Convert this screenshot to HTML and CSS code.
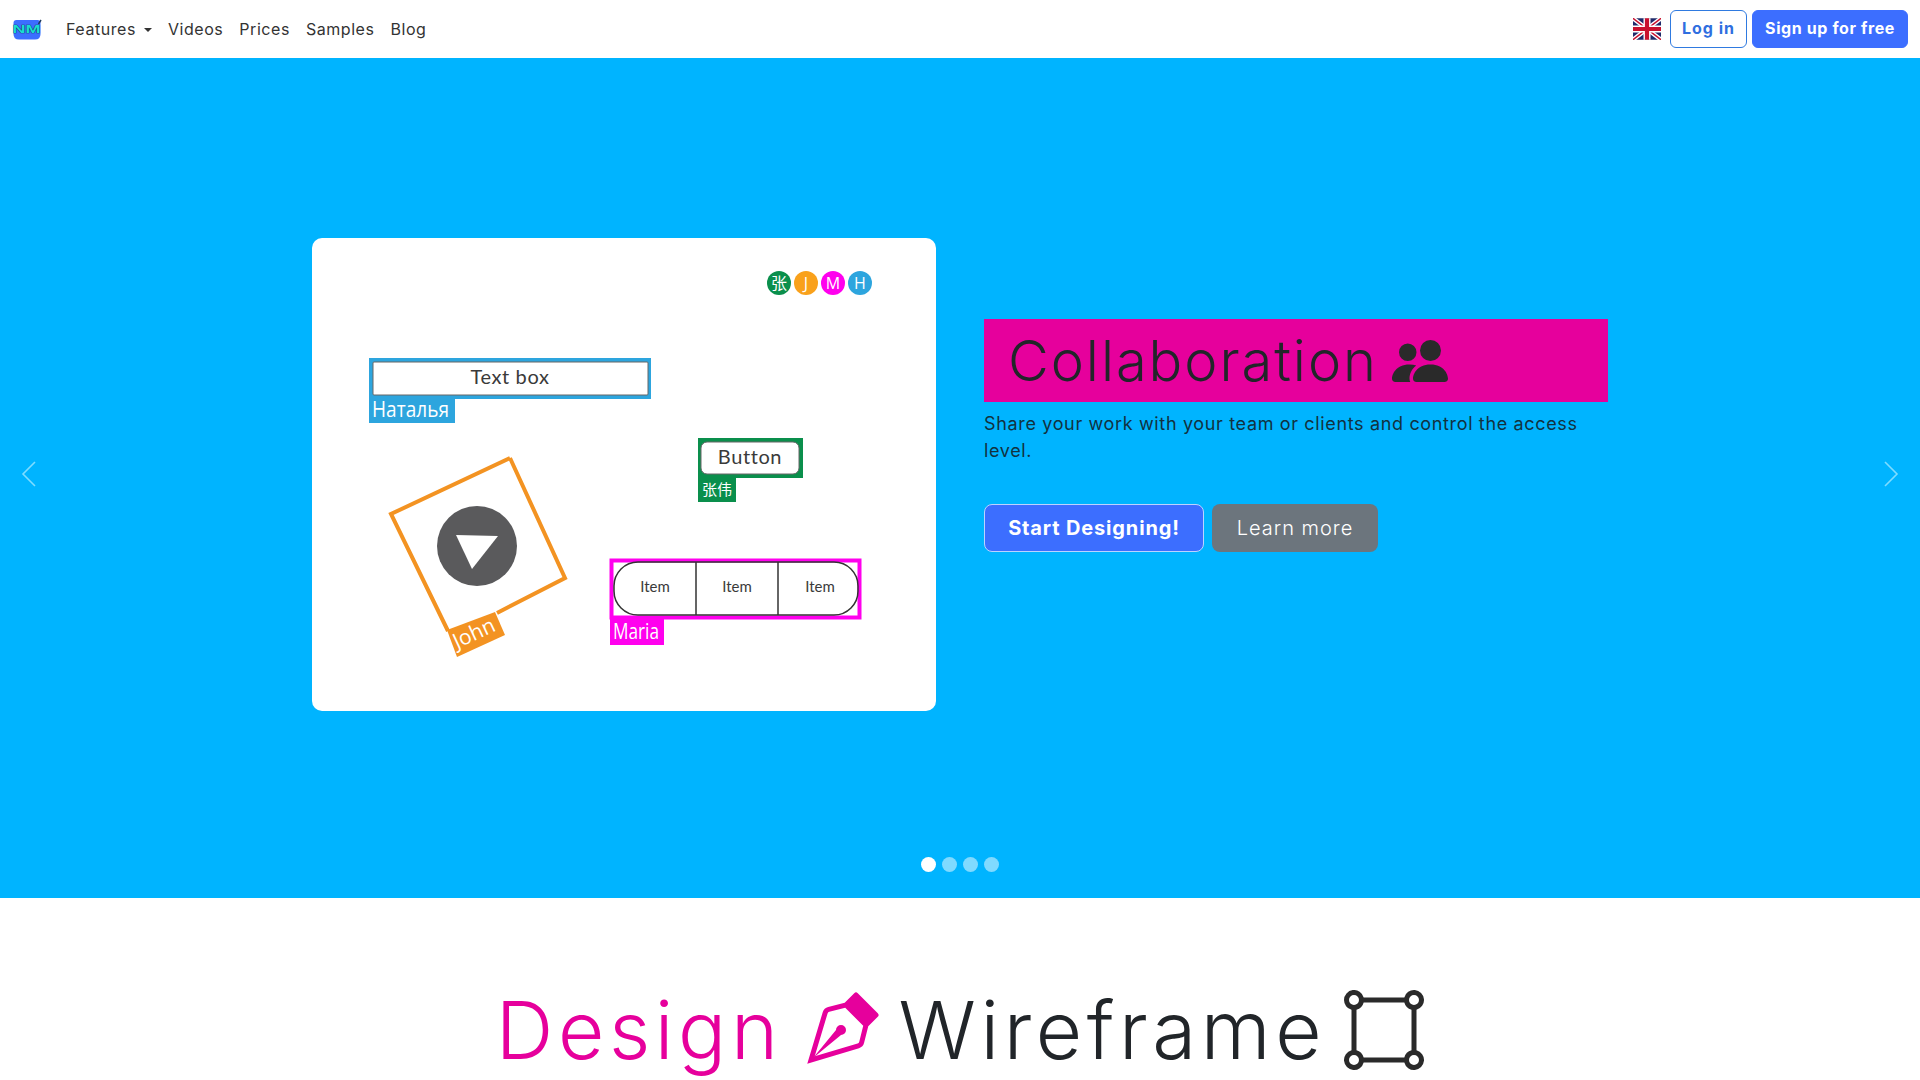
FILE: index.html
```html
<!DOCTYPE html>
<html lang="en">
<head>
  <meta charset="UTF-8" />
  <meta name="viewport" content="width=device-width, initial-scale=1.0"/>
  <title>Collaboration - Wireframe Designer</title>
  <link rel="stylesheet" href="styles.css">
</head>
<body>
  <nav class="navbar">
    <a class="brand" href="#">
      <svg class="brand-logo" viewBox="0 0 30 21">
        <path class="logo-bg" d="M1.500 4q0-3 3-3h21q3 0 3 3v11q0 5.500-5.500 5.500H7q-5.500 0-5.500-5.500z"/>
        <text class="logo-text" x="0.500" y="13.500" textLength="28" lengthAdjust="spacingAndGlyphs">NM</text>
        <path class="logo-pen" d="M26.500 5L29 1"/>
      </svg>
    </a>
    <ul class="nav-links">
      <li><a href="#">Features<span class="caret"></span></a></li>
      <li><a href="#">Videos</a></li>
      <li><a href="#">Prices</a></li>
      <li><a href="#">Samples</a></li>
      <li><a href="#">Blog</a></li>
    </ul>
    <div class="nav-right">
      <svg class="flag" viewBox="0 0 60 46">
        <rect width="60" height="46" fill="#1f2a6b"/>
        <path d="M0 0L60 46M60 0L0 46" stroke="#fff" stroke-width="9"/>
        <path d="M0 0L60 46M60 0L0 46" stroke="#c8102e" stroke-width="3"/>
        <path d="M30 0V46M0 23H60" stroke="#fff" stroke-width="15"/>
        <path d="M30 0V46M0 23H60" stroke="#c8102e" stroke-width="9"/>
      </svg>
      <a class="btn btn-outline" href="#">Log in</a>
      <a class="btn btn-primary" href="#">Sign up for free</a>
    </div>
  </nav>

  <section class="hero">
    <div class="slide">
      <div class="slide-image">
        <svg class="sketch" viewBox="312 238 624 473">
          <circle class="fill-green" cx="779" cy="283" r="12"/>
          <circle class="fill-orange" cx="806" cy="283" r="12"/>
          <circle class="fill-pink" cx="833" cy="283" r="12"/>
          <circle class="fill-blue" cx="860" cy="283" r="12"/>
          <text class="avatar-text cjk" x="779" y="289" text-anchor="middle">张</text>
          <text class="avatar-text" x="806" y="289" text-anchor="middle">J</text>
          <text class="avatar-text" x="833" y="289" text-anchor="middle">M</text>
          <text class="avatar-text" x="860" y="289" text-anchor="middle">H</text>

          <!-- text box, selected by Natalya -->
          <rect class="fill-blue" x="369" y="358" width="282" height="41"/>
          <rect class="inner" x="373" y="362" width="275" height="33" rx="1"/>
          <text class="hand hand-big" x="510" y="384" text-anchor="middle">Text box</text>
          <rect class="fill-blue" x="369" y="399" width="86" height="24"/>
          <text class="tag" x="372" y="417" textLength="77" lengthAdjust="spacingAndGlyphs">Наталья</text>

          <!-- button, selected by Zhang Wei -->
          <rect class="fill-green" x="698" y="438" width="105" height="40"/>
          <rect class="inner" x="701" y="442" width="98" height="32" rx="6"/>
          <text class="hand hand-big" x="750" y="464" text-anchor="middle">Button</text>
          <rect class="fill-green" x="698" y="478" width="38" height="24"/>
          <text class="tag-cjk cjk" x="702" y="495">张伟</text>

          <!-- video, selected by John -->
          <path class="frame-orange" d="M510 458L391 514L448 631M497 613L565 578L510 458"/>
          <polygon class="fill-orange-dark" points="447,630 457,657 505,635 495,612"/>
          <text class="tag" transform="translate(457 649) rotate(-25)" textLength="44" lengthAdjust="spacingAndGlyphs">John</text>
          <circle class="fill-grey" cx="477" cy="546" r="40"/>
          <polygon class="fill-white" points="456,535 498,536 472,569"/>

          <!-- item bar, selected by Maria -->
          <rect class="frame-pink" x="611.500" y="560.500" width="248" height="57"/>
          <rect class="pill" x="614" y="562" width="244" height="53" rx="24"/>
          <path class="pill" d="M696 562V615M778 562V615"/>
          <text class="hand" x="655" y="592" text-anchor="middle">Item</text>
          <text class="hand" x="737" y="592" text-anchor="middle">Item</text>
          <text class="hand" x="820" y="592" text-anchor="middle">Item</text>
          <rect class="fill-pink" x="610" y="619" width="54" height="26"/>
          <text class="tag" x="613" y="639" textLength="46" lengthAdjust="spacingAndGlyphs">Maria</text>
        </svg>
      </div>
      <div class="slide-text">
        <h2 class="slide-title">Collaboration
          <svg class="title-icon" viewBox="0 0 16 16"><path d="M7 14s-1 0-1-1 1-4 5-4 5 3 5 4-1 1-1 1H7zm4-6a3 3 0 1 0 0-6 3 3 0 0 0 0 6zm-5.784 6A2.238 2.238 0 0 1 5 13c0-1.355.68-2.75 1.936-3.72A6.325 6.325 0 0 0 5 9c-4 0-5 3-5 4s1 1 1 1h4.216zM4.500 8a2.500 2.500 0 1 0 0-5 2.500 2.500 0 0 0 0 5z"/></svg>
        </h2>
        <p class="slide-desc">Share your work with your team or clients and control the access level.</p>
        <div class="slide-actions">
          <a class="btn-lg btn-start" href="#">Start Designing!</a>
          <a class="btn-lg btn-more" href="#">Learn more</a>
        </div>
      </div>
    </div>

    <svg class="arrow arrow-left" viewBox="0 0 16 26"><path d="M14 1L2 13L14 25"/></svg>
    <svg class="arrow arrow-right" viewBox="0 0 16 26"><path d="M2 1L14 13L2 25"/></svg>

    <div class="dots">
      <span class="dot active"></span>
      <span class="dot"></span>
      <span class="dot"></span>
      <span class="dot"></span>
    </div>
  </section>

  <section class="intro">
    <h1 class="intro-title">
      <span class="pink">Design</span>
      <svg class="intro-icon pink" viewBox="0 0 16 16">
        <path fill-rule="evenodd" d="M10.646.646a.5.5 0 0 1 .708 0l4 4a.5.5 0 0 1 0 .708l-1.902 1.902-.829 3.313a1.5 1.5 0 0 1-1.024 1.073L1.254 14.746 4.358 4.4A1.5 1.5 0 0 1 5.43 3.377l3.313-.828L10.646.646zm-1.8 2.908-3.173.793a.5.5 0 0 0-.358.342l-2.57 8.565 8.567-2.57a.5.5 0 0 0 .34-.357l.794-3.174-3.6-3.6z"/>
        <path fill-rule="evenodd" d="M2.832 13.228 8 9a1 1 0 1 0-1-1l-4.228 5.168-.026.086.086-.026z"/>
      </svg>
      <span>Wireframe</span>
      <svg class="intro-icon" viewBox="0 0 16 16">
        <path d="M2 1a1 1 0 1 0 0 2 1 1 0 0 0 0-2zM0 2a2 2 0 0 1 3.937-.5h8.126A2 2 0 1 1 14.5 3.937v8.126a2 2 0 1 1-2.437 2.437H3.937A2 2 0 1 1 1.5 12.063V3.937A2 2 0 0 1 0 2zm2.5 1.937v8.126c.703.18 1.256.734 1.437 1.437h8.126a2.004 2.004 0 0 1 1.437-1.437V3.937A2.004 2.004 0 0 1 12.063 2.5H3.937A2.004 2.004 0 0 1 2.5 3.937zM14 1a1 1 0 1 0 0 2 1 1 0 0 0 0-2zM2 13a1 1 0 1 0 0 2 1 1 0 0 0 0-2zm12 0a1 1 0 1 0 0 2 1 1 0 0 0 0-2z"/>
      </svg>
    </h1>
  </section>
</body>
</html>
```

FILE: styles.css
```css
* {
  box-sizing: border-box;
}

:root {
  --hero-bg: #00b4ff;
  --pink: #e6009c;
  --blue: #3c6eff;
  --text: #212529;
}

html, body {
  height: 1080px;
  overflow: hidden;
}

body {
  margin: 0;
  background: #fff;
  color: var(--text);
  font-family: Inter, "Noto Sans", sans-serif;
}

a {
  text-decoration: none;
  color: inherit;
}

.navbar {
  height: 58px;
  display: flex;
  align-items: center;
  padding: 0 12px;
}

.brand {
  display: flex;
  margin-right: 24px;
}

.brand-logo {
  width: 30px;
  height: 21px;
}

.logo-bg { fill: #3c6eff; }

.logo-pen {
  stroke: #1e3a5c;
  stroke-width: 1.5;
}

.logo-text {
  fill: #19dcd0;
  stroke: #123a5c;
  stroke-width: .6;
  paint-order: stroke;
  font-family: "Liberation Sans", sans-serif;
  font-size: 11px;
  font-weight: 700;
}

.nav-links {
  display: flex;
  list-style: none;
  margin: 0;
  padding: 0;
  gap: 16px;
  font-size: 16px;
  letter-spacing: .55px;
  color: #333;
}

.caret {
  display: inline-block;
  margin-left: 8px;
  vertical-align: 3px;
  border-top: 4.8px solid;
  border-left: 4.8px solid transparent;
  border-right: 4.8px solid transparent;
}

.nav-right {
  margin-left: auto;
  display: flex;
  align-items: center;
  gap: 5px;
}

.flag {
  width: 28px;
  height: 22px;
  margin-right: 4px;
}

.btn {
  height: 38px;
  padding: 0 0 3px;
  display: flex;
  align-items: center;
  border: 1px solid var(--blue);
  border-radius: 6px;
  font-size: 16px;
  font-weight: 700;
}

.btn-outline {
  width: 77px;
  justify-content: center;
  color: #2f6fe0;
  border-color: #2f7ae0;
  letter-spacing: 1px;
}

.btn-primary {
  width: 156px;
  justify-content: center;
  background: var(--blue);
  color: #fff;
  letter-spacing: .6px;
}

.hero {
  position: relative;
  height: 840px;
  background: var(--hero-bg);
  padding-top: 180px;
}

.slide {
  display: grid;
  grid-template-columns: 624px 624px;
  gap: 48px;
  justify-content: center;
  align-items: start;
}

.slide-image {
  height: 473px;
  background: #fff;
  border-radius: 10px;
  overflow: hidden;
}

.sketch {
  display: block;
  width: 624px;
  height: 473px;
}

.fill-green { fill: #0a8f4c; }
.fill-orange { fill: #f9a11b; }
.fill-orange-dark { fill: #f39322; }
.fill-pink { fill: #ff00ee; }
.fill-blue { fill: #2da5de; }
.fill-grey { fill: #5a5a5c; }
.fill-white { fill: #fff; }

.inner {
  fill: #fff;
  stroke: #666;
  stroke-width: 1;
}

.pill {
  fill: none;
  stroke: #333;
  stroke-width: 1.5;
}

.frame-orange {
  fill: none;
  stroke: #f39322;
  stroke-width: 4;
}

.frame-pink {
  fill: none;
  stroke: #ff00ee;
  stroke-width: 4;
}

.avatar-text {
  fill: #fff;
  font-family: "Open Sans", sans-serif;
  font-size: 16px;
}

.hand {
  fill: #3a3a3a;
  font-family: Lato, sans-serif;
  font-size: 15px;
}

.hand-big {
  font-size: 20px;
  letter-spacing: .6px;
}

.tag {
  fill: #fff;
  font-family: "Open Sans", sans-serif;
  font-size: 21px;
}

.tag-cjk {
  fill: #fff;
  font-size: 15px;
}

.cjk {
  font-family: "Noto Sans CJK SC", sans-serif;
}

.slide-text {
  padding-top: 81px;
}

.slide-title {
  margin: 0;
  height: 83px;
  padding: 0 24px;
  display: flex;
  align-items: center;
  gap: 14px;
  background: var(--pink);
  font-size: 56px;
  font-weight: 300;
  letter-spacing: 1.95px;
  white-space: nowrap;
}

.title-icon {
  width: 56px;
  height: 56px;
  fill: #2a2a2a;
}

.slide-desc {
  margin: 8px 0 0;
  font-size: 18px;
  line-height: 27px;
  letter-spacing: .65px;
  color: #12323f;
}

.slide-actions {
  display: flex;
  gap: 8px;
  margin-top: 40px;
}

.btn-lg {
  height: 48px;
  display: flex;
  align-items: center;
  border-radius: 8px;
  font-size: 20px;
  color: #fff;
}

.btn-start {
  width: 220px;
  justify-content: center;
  background: var(--blue);
  border: 1px solid #bcd3ff;
  font-weight: 700;
  letter-spacing: .85px;
}

.btn-more {
  width: 166px;
  justify-content: center;
  background: #6c757d;
  font-weight: 300;
  letter-spacing: 1px;
}

.arrow {
  position: absolute;
  top: 403px;
  width: 16px;
  height: 26px;
  fill: none;
  stroke: #7fdcff;
  stroke-width: 1.6;
}

.arrow-left { left: 21px; }
.arrow-right { right: 21px; }

.dots {
  position: absolute;
  left: 0;
  right: 0;
  bottom: 26px;
  display: flex;
  justify-content: center;
  gap: 6px;
}

.dot {
  width: 15px;
  height: 15px;
  border-radius: 50%;
  background: #fff;
  opacity: .5;
}

.dot.active {
  opacity: 1;
}

.intro {
  padding-top: 84px;
}

.intro-title {
  margin: 0;
  display: flex;
  justify-content: center;
  align-items: center;
  gap: 18px;
  font-size: 80px;
  font-weight: 300;
  line-height: 96px;
  letter-spacing: 4.6px;
}

.pink {
  color: var(--pink);
  fill: var(--pink);
}

.intro-icon {
  width: 80px;
  height: 80px;
  fill: #2a2a2a;
}

.intro-icon.pink {
  fill: var(--pink);
}
```
